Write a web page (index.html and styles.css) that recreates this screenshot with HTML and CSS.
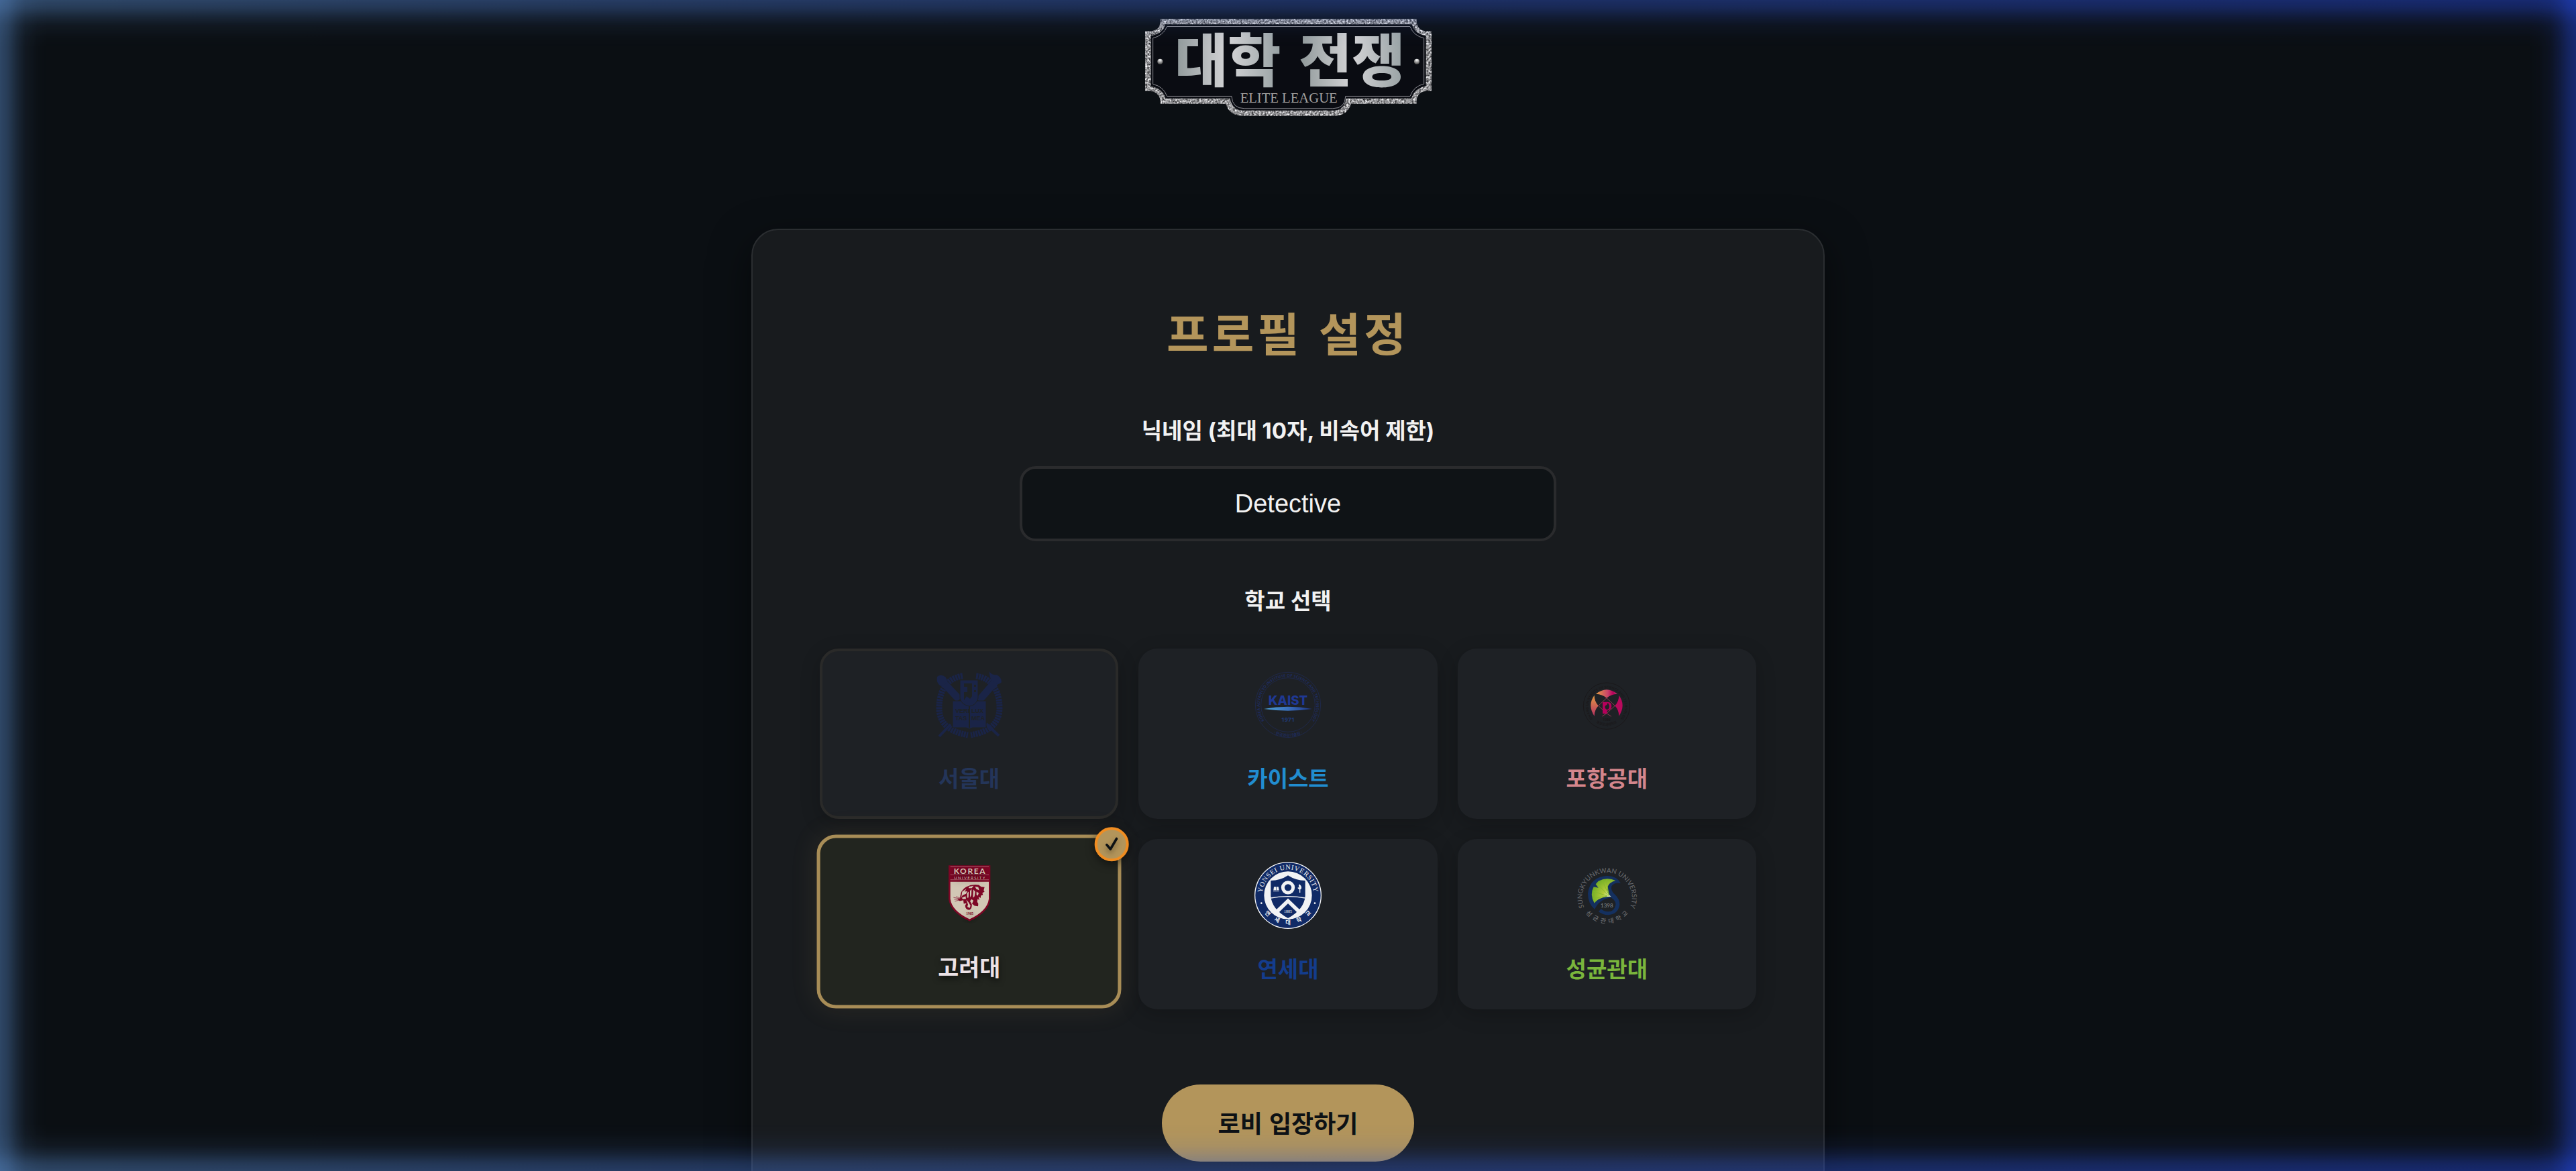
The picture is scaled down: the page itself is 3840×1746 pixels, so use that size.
FILE: index.html
```html
<!DOCTYPE html>
<html lang="ko">
<head>
    <meta charset="UTF-8">
    <meta name="viewport" content="width=device-width, initial-scale=1.0">
    <title>대학전쟁 - 프로필 설정</title>
    <link rel="stylesheet" href="styles.css">
</head>
<body>
    <header class="site-header">
        <svg class="logo" viewBox="140 84 1282 434" role="img" aria-label="대학전쟁 ELITE LEAGUE">
            <defs>
                <linearGradient id="silver" x1="0" x2="1">
                    <stop offset="0" stop-color="#8f9899"/>
                    <stop offset=".5" stop-color="#d4d4d6"/>
                    <stop offset="1" stop-color="#96a0a2"/>
                </linearGradient>
                <radialGradient id="rivet" cx=".5" cy=".2" r=".8">
                    <stop offset="0" stop-color="#fff"/>
                    <stop offset="1" stop-color="#444"/>
                </radialGradient>
                <filter id="grain" x="0" y="0" width="1" height="1" color-interpolation-filters="sRGB">
                    <feTurbulence type="fractalNoise" baseFrequency=".12" numOctaves="3" result="n"/>
                    <feColorMatrix in="n" values="1.4 0 0 0 -.12  1.4 0 0 0 -.12  1.4 0 0 0 -.11  0 0 0 0 1"/>
                    <feComposite in2="SourceGraphic" operator="in"/>
                </filter>
            </defs>
            <path fill="#0a0c12" d="M208 84H1355V98Q1362 138 1400 138H1422V407H1400Q1362 410 1355 445V464H1062Q1045 518 985 518H580Q518 518 500 464H208V445Q200 410 162 407H140V138H162Q204 136 208 98Z"/>
            <path filter="url(#grain)" fill="#999" fill-rule="evenodd" d="M208 84H1355V98Q1362 138 1400 138H1422V407H1400Q1362 410 1355 445V464H1062Q1045 518 985 518H580Q518 518 500 464H208V445Q200 410 162 407H140V138H162Q204 136 208 98Z M230 108Q220 150 166 160V385Q218 395 232 440H520Q530 494 580 494H985Q1030 494 1040 440H1332Q1346 394 1397 384V160Q1346 150 1334 108Z"/>
            <path fill="none" stroke="#8c8c92" stroke-width="3" d="M238 118H1326Q1342 160 1388 170V375Q1342 385 1326 430H1037Q1036 485 980 485H585Q530 485 527 430H238Q222 386 175 376V170Q222 158 238 118Z"/>
            <circle cx="207" cy="275" r="12" fill="url(#rivet)"/>
            <circle cx="1356" cy="275" r="12" fill="url(#rivet)"/>
            <text class="logo-title" x="510" y="366" text-anchor="middle">대학</text>
            <text class="logo-title" x="1066" y="366" text-anchor="middle">전쟁</text>
            <text class="logo-sub" x="783" y="460" text-anchor="middle">ELITE LEAGUE</text>
        </svg>
    </header>

    <main class="profile-card">
        <form onsubmit="return false">
            <h1>프로필 설정</h1>

            <label class="field-label" for="nickname">닉네임 (최대 10자, 비속어 제한)</label>
            <input class="nickname" type="text" id="nickname" maxlength="10" value="Detective">

            <p class="field-label" id="schoolLabel">학교 선택</p>
            <div class="school-grid" role="radiogroup" aria-labelledby="schoolLabel">
                <label class="school snu">
                    <input type="radio" name="school" value="snu">
                    <svg class="emblem" viewBox="0 0 100 100">
                        <g fill="none" stroke="#1a2447">
                            <path stroke-width="9" stroke-dasharray="3 1" d="M40 7C16 10 5 30 5 54S20 90 48 95"/>
                            <path stroke-width="9" stroke-dasharray="3 1" d="M60 7C84 10 95 30 95 54S80 90 52 95"/>
                            <path stroke-width="4" d="M5 97L22 79M94 96L75 78"/>
                            <path stroke-width="11" d="M7 12L35 42M90 14L64 44"/>
                        </g>
                        <g fill="#1a2447">
                            <path d="M80 0Q83 6 90 5Q98 8 98 16Q94 22 86 16Q79 10 80 0ZM2 8Q8 3 15 9L18 17L8 22Q0 18 2 8Z"/>
                            <path d="M25 44H75V84H55L50 86L45 84H25Z" stroke="#1e2225"/>
                            <path d="M36 13H63V40Q60 51 50 52Q38 50 36 40Z" stroke="#1e2225"/>
                            <path fill="#1e2225" d="M42 18H54V37L51 41L46 37L42 43V31H47V23H42ZM57 20h3v3h-3zM57 28h3v3h-3zM49 52h2v32h-2z"/>
                        </g>
                        <g class="snu-motto">
                            <text x="29" y="62">VERI</text><text x="53" y="62">LUX</text>
                            <text x="29" y="73">TAS</text><text x="53" y="73">MEA</text>
                        </g>
                    </svg>
                    <span>서울대</span>
                </label>

                <label class="school kaist">
                    <input type="radio" name="school" value="kaist">
                    <svg class="emblem" viewBox="90 154 300 300">
                        <defs>
                            <path id="kaistTop" d="M150 393A126 126 0 1 1 330 393"/>
                            <path id="kaistBottom" d="M161 423A143 143 0 0 0 319 423"/>
                            <linearGradient id="beam"><stop offset="0" stop-color="#4fa4d4"/><stop offset=".5" stop-color="#3a70bd"/><stop offset="1" stop-color="#1f3583"/></linearGradient>
                        </defs>
                        <g fill="none" stroke="#1e2c5c" stroke-width="2">
                            <circle cx="240" cy="304" r="146"/>
                            <circle cx="240" cy="304" r="121"/>
                        </g>
                        <text class="kaist-ring"><textPath href="#kaistTop" startOffset="50%" text-anchor="middle">KOREA ADVANCED INSTITUTE OF SCIENCE AND TECHNOLOGY</textPath></text>
                        <text class="kaist-ring"><textPath href="#kaistBottom" startOffset="50%" text-anchor="middle">· 한국과학기술원 ·</textPath></text>
                        <text class="kaist-name" x="240" y="305" text-anchor="middle">KAIST</text>
                        <path fill="url(#beam)" d="M132 322Q240 302 348 322Q240 338 132 322Z"/>
                        <text class="kaist-year" x="240" y="380" text-anchor="middle">1971</text>
                    </svg>
                    <span>카이스트</span>
                </label>

                <label class="school postech">
                    <input type="radio" name="school" value="postech">
                    <svg class="emblem" viewBox="555 156 300 300">
                        <defs>
                            <path id="posTop" d="M645 370A82 82 0 1 1 765 370"/>
                            <path id="posBottom" d="M650 380A90 90 0 0 0 760 380"/>
                            <linearGradient id="posFill"><stop offset="0" stop-color="#e29b42"/><stop offset=".55" stop-color="#c94468"/><stop offset=".8" stop-color="#b5005b"/><stop offset="1" stop-color="#b83a66"/></linearGradient>
                            <linearGradient id="posLeft" x2="0" y2="1"><stop offset="0" stop-color="#e29b42"/><stop offset="1" stop-color="#b82f62"/></linearGradient>
                        </defs>
                        <circle cx="705" cy="311" r="104" fill="none" stroke="#1a181a" stroke-width="3"/>
                        <text class="postech-ring"><textPath href="#posTop" startOffset="50%" text-anchor="middle">POHANG UNIVERSITY OF SCIENCE AND TECHNOLOGY</textPath></text>
                        <text class="postech-ring"><textPath href="#posBottom" startOffset="50%" text-anchor="middle">포항공과대학교</textPath></text>
                        <path fill="url(#posFill)" d="M657 257Q705 218 753 257Q725 258 705 275Q685 258 657 257Z"/>
                        <path fill="url(#posLeft)" d="M650 263Q618 306 650 356Q650 330 668 310Q650 290 650 263Z"/>
                        <path fill="#b80a5c" d="M760 263Q792 306 760 356Q760 330 742 310Q760 290 760 263Z"/>
                        <path fill="none" stroke="#8d3a50" stroke-width="3" d="M705 275L742 310L705 344L668 310ZM685 357L705 344L726 358"/>
                        <path fill="#b5005b" fill-rule="evenodd" d="M687 293H710Q727 294 727 312Q726 329 707 332V345H687ZM706 328Q692 318 700 309Q708 306 710 297Q720 308 716 320Q713 326 706 328Z"/>
                        <text class="postech-ring" x="705" y="379" text-anchor="middle">1986</text>
                    </svg>
                    <span>포항공대</span>
                </label>

                <label class="school korea">
                    <input type="radio" name="school" value="korea" checked>
                    <svg class="emblem" viewBox="162 33 306 306">
                        <path fill="#7d0625" d="M222 66H409V216Q404 275 316 316Q228 275 222 216Z"/>
                        <path fill="#d2c7b5" d="M230 140H402V216Q396 269 316 307Q236 269 230 216Z"/>
                        <path stroke="#c58f94" stroke-width="2" d="M230 73H402M230 109H402M230 131H402"/>
                        <text class="korea-name" x="318" y="104" text-anchor="middle">KOREA</text>
                        <text class="korea-sub" x="318" y="128" text-anchor="middle">UNIVERSITY</text>
                        <path fill="#7d0625" d="M274 206Q276 178 300 163Q328 149 357 154L368 162L383 164L379 178L383 184L373 190L376 198L366 202L366 212L356 208L360 222L352 216L350 229L355 238L354 249L338 247L327 238L333 224L325 218L318 226L326 240Q328 259 315 266Q297 264 296 246L302 236L290 238L288 222L272 226L262 218L274 214Z"/>
                        <path fill="#d2c7b5" d="M283 184L302 171L294 184L306 182L300 194L285 200L279 210ZM312 162L334 158L326 168H312ZM340 161L355 164L359 178L346 172ZM281 212L298 204L300 216L286 217ZM305 190L312 184L311 210L305 212ZM318 180L325 172L324 198L318 210ZM333 174L341 184L338 205L331 211ZM347 184L357 190L353 202L347 198ZM301 220L310 230L320 246L317 257L306 252L309 241Z"/>
                        <path stroke="#7d0625" stroke-width="2" d="M275 216L244 210M273 219L247 218M276 220L250 227M278 214L256 206"/>
                        <text class="korea-year" x="317" y="288" text-anchor="middle">1905</text>
                    </svg>
                    <span>고려대</span>
                    <i class="check">
                        <svg viewBox="0 0 20 24"><path d="M2 13L8 20L18 3" fill="none" stroke="#0d1114" stroke-width="4" stroke-linecap="round" stroke-linejoin="round"/></svg>
                    </i>
                </label>

                <label class="school yonsei">
                    <input type="radio" name="school" value="yonsei">
                    <svg class="emblem" viewBox="90 138 300 300">
                        <defs>
                            <path id="yonTop" d="M124 288A116 116 0 0 1 356 288"/>
                            <path id="yonBottom" d="M122 346A134 134 0 0 0 358 346"/>
                        </defs>
                        <circle cx="240" cy="288" r="150" fill="#f1f2f4"/>
                        <circle cx="240" cy="288" r="146" fill="#102a66"/>
                        <circle cx="240" cy="288" r="107" fill="#f1f2f4"/>
                        <path fill="#102a66" d="M163 222Q205 222 240 199Q275 222 317 222V290Q313 350 240 390Q167 350 163 290Z"/>
                        <path fill="none" stroke="#f1f2f4" stroke-width="4" d="M163 300Q240 286 317 300"/>
                        <path fill="none" stroke="#f1f2f4" stroke-width="17" d="M186 365L240 313L294 365"/>
                        <circle cx="240" cy="253" r="23" fill="none" stroke="#f1f2f4" stroke-width="15"/>
                        <path fill="#f1f2f4" d="M177 250H186V265H175ZM188 250H197L200 265H188ZM174 267H200V270H174ZM291 238Q302 247 300 257L295 262V276H291V262L284 257V253H292Q284 247 291 238Z"/>
                        <text class="yonsei-year" x="240" y="367" text-anchor="middle">1885</text>
                        <text class="yonsei-ring"><textPath href="#yonTop" startOffset="50%" text-anchor="middle">YONSEI UNIVERSITY</textPath></text>
                        <text class="yonsei-ring-ko"><textPath href="#yonBottom" startOffset="50%" text-anchor="middle">연 세 대 학 교</textPath></text>
                        <circle cx="121" cy="323" r="4" fill="#f1f2f4"/>
                        <circle cx="360" cy="323" r="4" fill="#f1f2f4"/>
                    </svg>
                    <span>연세대</span>
                </label>

                <label class="school skku">
                    <input type="radio" name="school" value="skku">
                    <svg class="emblem" viewBox="555 138 300 300">
                        <defs>
                            <path id="skkuTop" d="M606 344A111 111 0 1 1 808 344"/>
                            <path id="skkuBottom" d="M606 360A123 123 0 0 0 808 360"/>
                            <radialGradient id="leaf" gradientUnits="userSpaceOnUse" cx="722" cy="292" r="85"><stop offset="0" stop-color="#f4f6d8"/><stop offset=".4" stop-color="#b4cb3a"/><stop offset="1" stop-color="#74ad25"/></radialGradient>
                        </defs>
                        <path fill="#14305f" d="M768 234Q750 200 705 201Q630 206 621 280Q621 325 652 351Q668 308 724 298Q748 312 745 333Q738 361 712 361Q690 360 680 348L669 361Q687 376 712 376Q755 374 763 331Q764 304 742 284Q722 268 727 247Q740 228 768 234Z"/>
                        <path fill="url(#leaf)" d="M745 222Q708 205 668 224L656 238L668 254L647 250Q628 285 650 323Q670 294 725 293Q708 284 709 250Q716 230 745 222Z"/>
                        <path stroke="#86b92d" stroke-width="3" d="M715 287L685 220M715 288L703 216M713 290L665 238M708 291L645 270M705 292L645 302"/>
                        <text class="skku-ring"><textPath href="#skkuTop" startOffset="50%" text-anchor="middle">SUNGKYUNKWAN UNIVERSITY</textPath></text>
                        <text class="skku-ring-ko"><textPath href="#skkuBottom" startOffset="50%" text-anchor="middle">성 균 관 대 학 교</textPath></text>
                        <text class="skku-year" x="706" y="341" text-anchor="middle">1398</text>
                    </svg>
                    <span>성균관대</span>
                </label>
            </div>

            <button class="enter" type="submit">로비 입장하기</button>
        </form>
    </main>

    <div class="edge-glow"></div>
</body>
</html>
```
FILE: styles.css
```css
* {
    box-sizing: border-box;
}
html {
    scrollbar-width: none;
}
body {
    margin: 0;
    min-height: 100vh;
    background: #0b0f13;
    color: #f2f2f2;
    font-family: "Noto Sans CJK KR", sans-serif;
}

/* 로고 */
.site-header {
    display: flex;
    justify-content: center;
    padding: 28px 0 168px;
}
.logo {
    width: 427px;
    height: 145px;
}
.logo-title {
    font-size: 258px;
    font-weight: 900;
    fill: url(#silver);
}
.logo-sub {
    font-family: "Liberation Serif", serif;
    font-size: 62px;
    fill: #a3a09e;
}

/* 프로필 카드 */
.profile-card {
    max-width: 1600px;
    margin: 0 auto 100px;
    padding: 100px;
    background: #181b1e;
    border: 2px solid #2b2e31;
    border-radius: 40px;
    box-shadow: 0 20px 60px rgba(0, 0, 0, 0.5);
}
.profile-card form {
    display: flex;
    flex-direction: column;
    align-items: center;
}
h1 {
    margin: 0 0 66px;
    color: #b3955b;
    font-size: 68px;
    line-height: 104px;
    letter-spacing: 5px;
}
.field-label {
    margin: 0 0 24px;
    font-family: Inter, "Noto Sans CJK KR", sans-serif;
    font-size: 33px;
    font-weight: 700;
    line-height: 58px;
}
.nickname {
    width: 800px;
    max-width: 100%;
    height: 112px;
    margin-bottom: 60px;
    border: 4px solid #2a2b2d;
    border-radius: 24px;
    background: #0f1316;
    color: #f2f2f2;
    font-family: "Liberation Sans", Arial, sans-serif;
    font-size: 38px;
    text-align: center;
}

/* 학교 선택 */
.school-grid {
    display: grid;
    grid-template-columns: repeat(3, 1fr);
    gap: 30px;
    width: 100%;
    margin: 18px 0 112px;
}
.school {
    position: relative;
    display: flex;
    flex-direction: column;
    align-items: center;
    gap: 30px;
    padding: 30px;
    border: 4px solid transparent;
    border-radius: 28px;
    background: #1e2125;
    box-shadow: 0 8px 30px rgba(0, 0, 0, 0.2);
    font-size: 33px;
    font-weight: 700;
    line-height: 56px;
    cursor: pointer;
}
.school input {
    position: absolute;
    opacity: 0;
}
.emblem {
    width: 100px;
    height: 100px;
}
.snu {
    border-color: #2a2a29;
    color: #243559;
}
.kaist {
    color: #218dd0;
}
.postech {
    color: #d4868c;
}
.korea {
    color: #ece2e6;
    text-shadow: 0 4px 8px rgba(0, 0, 0, 0.6);
}
.yonsei {
    color: #143c8c;
}
.skku {
    color: #7ab53c;
}
.school:has(input:checked) {
    border: 5px solid #a88d57;
    padding: 29px;
    background: #22251f;
    box-shadow: 0 0 40px rgba(179, 149, 91, 0.12);
    transform: translateY(-4px) scale(1.02);
}
.check {
    position: absolute;
    top: -16px;
    right: -16px;
    display: flex;
    align-items: center;
    justify-content: center;
    width: 50px;
    height: 50px;
    border: 4px solid #f08d22;
    border-radius: 50%;
    background: #b3955b;
    box-shadow: 0 4px 12px rgba(0, 0, 0, 0.5);
}
.check svg {
    width: 18px;
    height: 22px;
    filter: drop-shadow(0 4px 4px rgba(0, 0, 0, 0.4));
}

/* 교표 안의 글자 */
.snu-motto {
    font: 700 9px "Liberation Sans", sans-serif;
    fill: #1e2225;
}
.kaist-ring {
    font: 700 18px "Open Sans", "Noto Sans CJK KR", sans-serif;
    fill: #1e2c5c;
}
.kaist-name {
    font: 800 56px Inter, sans-serif;
    fill: #1f3893;
}
.kaist-year {
    font: 700 26px "Open Sans", sans-serif;
    fill: #1f3a7c;
}
.postech-ring {
    font: 700 15px "Open Sans", "Noto Sans CJK KR", sans-serif;
    fill: #1a181a;
}
.korea-name {
    font: 700 36px Lato, sans-serif;
    letter-spacing: 5px;
    fill: #d2c7b5;
}
.korea-sub {
    font: 400 18px Lato, sans-serif;
    letter-spacing: 4px;
    fill: #d2c7b5;
}
.korea-year {
    font: 700 16px "Liberation Serif", serif;
    fill: #7d0625;
}
.yonsei-year {
    font: 400 18px "Liberation Serif", serif;
    fill: #f1f2f4;
}
.yonsei-ring {
    font: 400 31px "Liberation Serif", serif;
    fill: #f1f2f4;
    letter-spacing: 2px;
}
.yonsei-ring-ko {
    font: 700 25px "Noto Sans CJK KR", sans-serif;
    fill: #f1f2f4;
    word-spacing: 24px;
}
.skku-ring {
    font: 400 30px Lato, sans-serif;
    fill: #6a6c70;
}
.skku-ring-ko {
    font: 500 27px "Noto Sans CJK KR", sans-serif;
    fill: #6a6c70;
    word-spacing: 6px;
}
.skku-year {
    font: 400 24px Lato, sans-serif;
    fill: #8a8c90;
}

.enter {
    height: 115px;
    padding: 0 84px;
    border: none;
    border-radius: 58px;
    background: #b3955b;
    color: #0d1114;
    font-family: inherit;
    font-size: 36px;
    font-weight: 700;
    line-height: 52px;
    padding-bottom: 4px;
    cursor: pointer;
}

/* 화면 가장자리 빛 */
.edge-glow {
    position: fixed;
    inset: 0;
    pointer-events: none;
    background: linear-gradient(to right, #5a8ccc, #3459be 50%, #2549e1);
    --fade: rgba(0, 0, 0, 0.45), rgba(0, 0, 0, 0.36) 12px, rgba(0, 0, 0, 0.2) 25px, rgba(0, 0, 0, 0.08) 38px, rgba(0, 0, 0, 0.02) 55px, transparent 70px;
    mask-image:
        linear-gradient(to right, var(--fade)),
        linear-gradient(to left, var(--fade)),
        linear-gradient(to bottom, var(--fade)),
        linear-gradient(to top, var(--fade));
}
```
